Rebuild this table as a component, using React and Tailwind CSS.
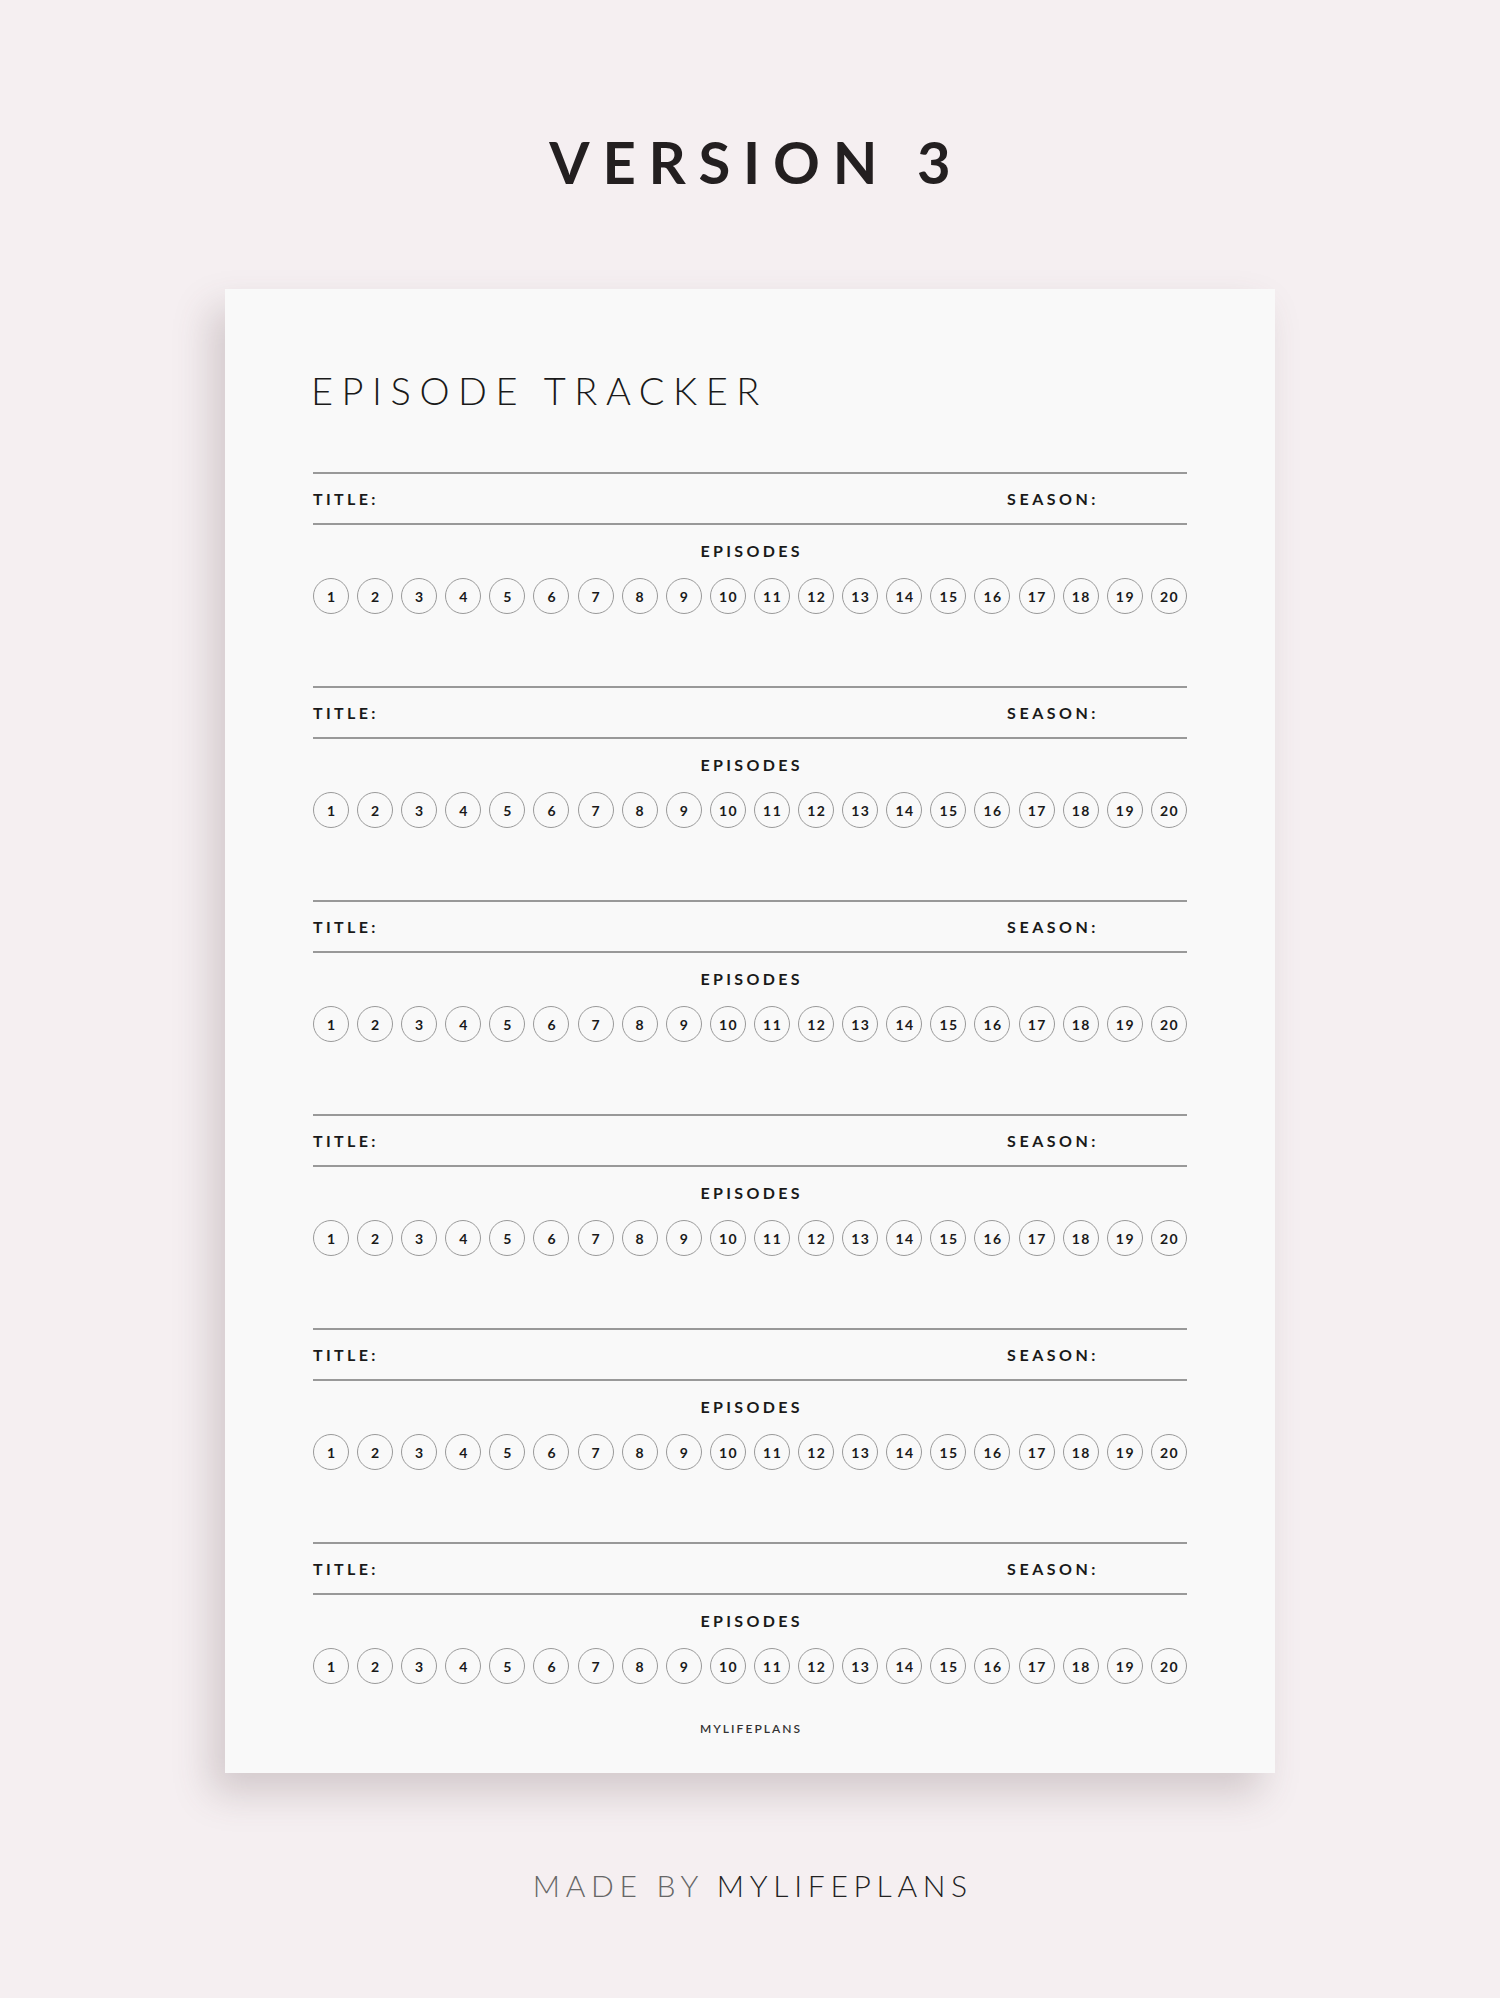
import React from 'react';

const episodes = Array.from({ length: 20 }, (_, i) => i + 1);
const blocks = [1, 2, 3, 4, 5, 6];

const font = { fontFamily: '"Lato", "Open Sans", sans-serif' };

const TrackerBlock = () => (
  <div className="flex flex-col">
    {/* title / season row between two rules */}
    <div className="h-[53px] border-t-2 border-b-2 border-[#999999] flex items-center justify-between">
      <span className="text-[16px] leading-[16px] font-bold tracking-[0.21em] text-[#1a1a1a]">TITLE:</span>
      <span className="text-[16px] leading-[16px] font-bold tracking-[0.22em] text-[#1a1a1a] mr-[88px]">SEASON:</span>
    </div>
    <div className="mt-[18px] text-center text-[16px] leading-[16px] font-bold tracking-[0.21em] text-[#1a1a1a] pl-[0.21em]">
      EPISODES
    </div>
    <div className="mt-[19px] flex justify-between">
      {episodes.map((n) => (
        <div
          key={n}
          className="w-[36px] h-[36px] rounded-full border-[1.5px] border-[#9a9a9a] flex items-center justify-center text-[14px] font-bold tracking-[0.1em] pl-[0.1em] text-[#1a1a1a]"
        >
          {n}
        </div>
      ))}
    </div>
  </div>
);

const App = () => {
  return (
    <div className="w-[1500px] h-[1998px] bg-[#f5eff1] flex flex-col items-center" style={font}>
      {/* Header */}
      <h1 className="mt-[133px] text-[58px] leading-[58px] font-bold tracking-[0.22em] text-[#231f20] pl-[0.22em]">
        VERSION 3
      </h1>

      {/* Paper */}
      <div className="mt-[98px] w-[1050px] h-[1484px] bg-[#f9f9f9] shadow-[-14px_20px_36px_rgba(90,70,75,0.22)] px-[88px] pt-[82px] flex flex-col">
        <h2 className="-ml-[2px] text-[38px] leading-[38px] font-light tracking-[0.225em] text-[#1a1a1a]">EPISODE TRACKER</h2>

        <div className="mt-[63px] flex flex-col gap-[72px]">
          {blocks.map((b) => (
            <TrackerBlock key={b} />
          ))}
        </div>

        <div className="mt-[39px] text-center text-[12px] leading-[12px] font-semibold tracking-[0.17em] pl-[0.17em] text-[#333333]">
          MYLIFEPLANS
        </div>
      </div>

      {/* Footer */}
      <div className="mt-[97px] text-[30px] leading-[30px] tracking-[0.19em] pl-[0.19em]">
        <span className="font-light text-[#666666]">MADE BY </span>
        <span className="font-light text-[#222222]">MYLIFEPLANS</span>
      </div>
    </div>
  );
};

export default App;
